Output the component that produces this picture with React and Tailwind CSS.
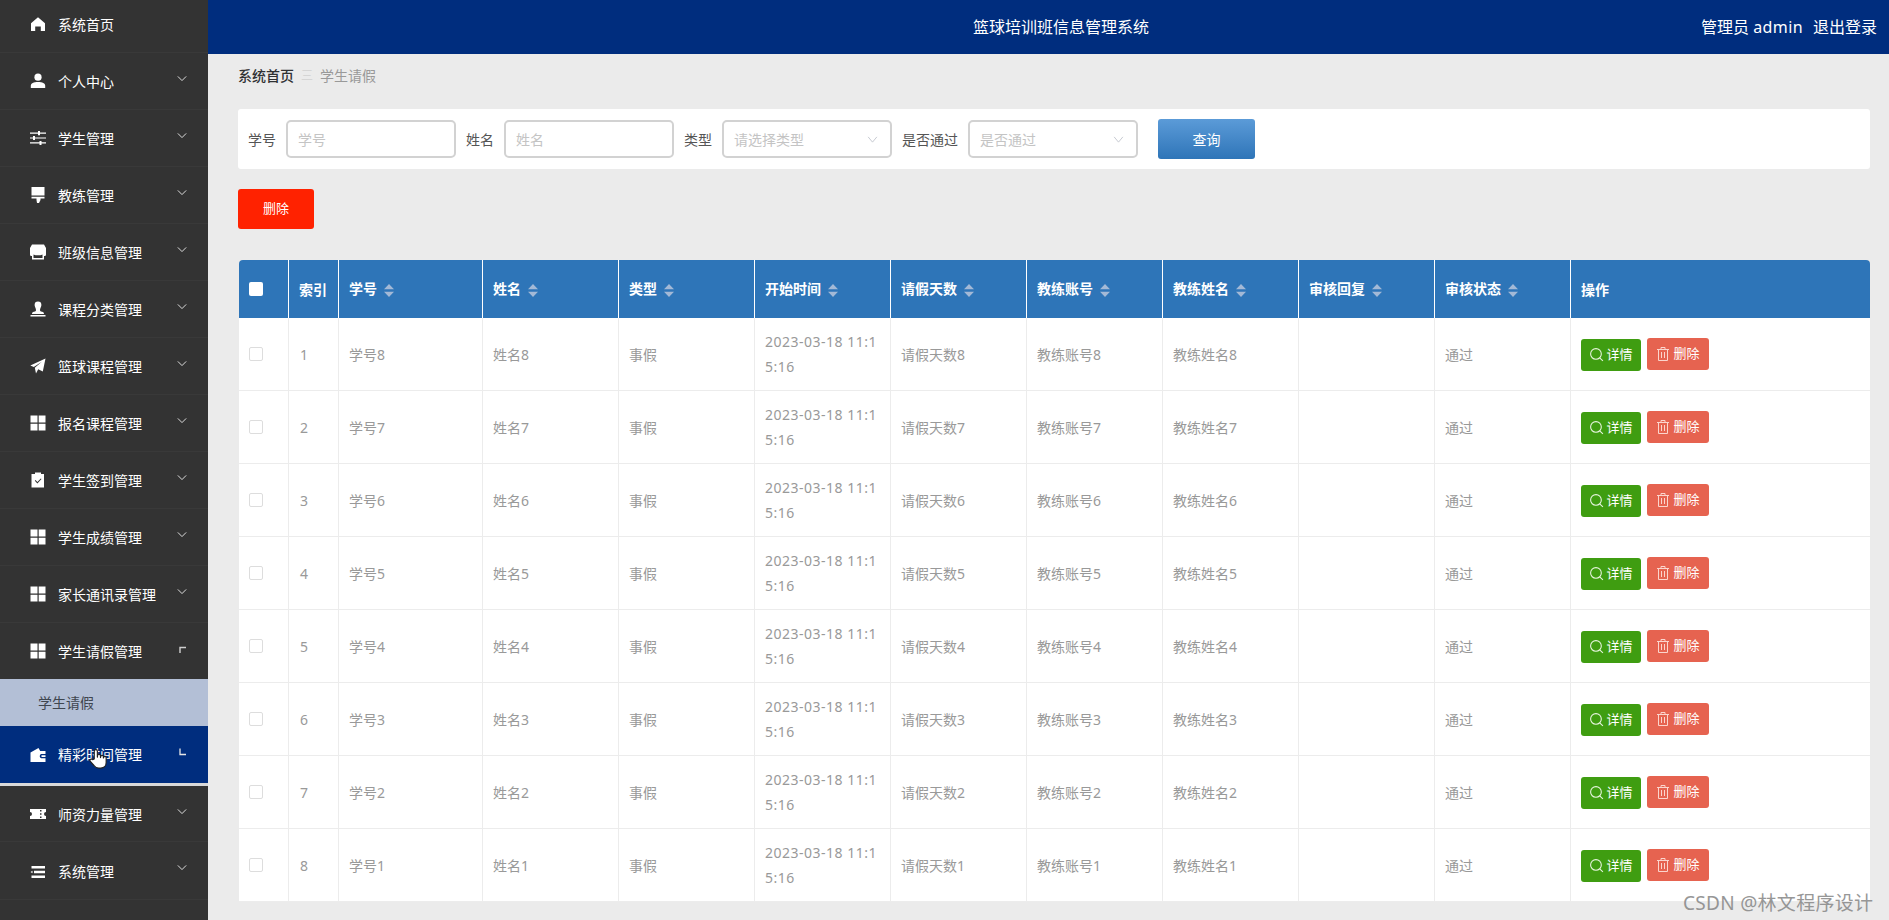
import React from "react";

const Ic = ({ children }) => (
  <svg viewBox="0 0 16 16" className="w-[16px] h-[16px] shrink-0" fill="#fff">{children}</svg>
);
const icons = {
  home: <Ic><path d="M8 1.2 15 7.2V15h-4.2v-4.6H5.2V15H1V7.2z" /></Ic>,
  user: <Ic><circle cx="8" cy="4.2" r="3.6" /><path d="M.8 15v-2.2C.8 10.2 3.6 9 8 9s7.2 1.2 7.2 3.8V15z" /></Ic>,
  sliders: <Ic><path d="M0 2.5h8V1h2v1.5h6v1.3h-6v1.5H8V3.8H0zM0 7.4h3V6h2v1.4h11v1.2H5V10H3V8.6H0zM0 12.3h9.500V11h2v1.300H16v1.300h-4.500V15h-2v-1.400H0z" /></Ic>,
  brush: <Ic><path d="M1.500 0h13v8.500h-13zM1.500 9.700h13V11.500h-4V13L9 16H7l-.5-3v-1.500h-5z" /></Ic>,
  shop: <Ic><path d="M2 .5h12L16 4v6.500c0 1-.8 1.500-1.500 1.500H14V15.500H2V12h-.5C.8 12 0 11.500 0 10.500V4zM3.500 10.500v3.500h9v-3.500l-2 .8H5.500z" fillRule="evenodd" /></Ic>,
  stamp: <Ic><path d="M8 0.500a3.400 3.400 0 0 1 3.400 3.400c0 2-1.400 3-1.400 5 0 1 .7 1.500 2 1.800 1.500.4 2 1 2 2.300H2c0-1.300.5-1.900 2-2.300 1.300-.3 2-.8 2-1.800 0-2-1.400-3-1.400-5A3.400 3.400 0 0 1 8 .5zM.5 14h15v1.500H.5z" /></Ic>,
  plane: <Ic><path d="M15.500.5 12.800 13.500 8.200 11.200 6 15.500 4.800 9.800 11.800 3.800 3.800 9 .3 7.400z" /></Ic>,
  grid: <Ic><path d="M.5.500h7v7h-7zM8.700.500h6.800v7H8.700zM.5 8.700h7v6.800h-7zM8.700 8.700h6.800v6.800H8.700z" /></Ic>,
  claim: <Ic><path fillRule="evenodd" d="M5 .5h6v1.500h3V15.500H1.500V2H5zM4.800 8.800l.7-.7 1.900 2 3.400-3.700.7.700-4.100 4.500z" /></Ic>,
  wallet: <Ic><path fillRule="evenodd" d="M.500 5.500 8.500 1l1.700 3h5.300v3h-4.300a2.300 2.300 0 0 0 0 4.300h4.300V15H.5zM11.500 8.300h4v1.600h-4z" /></Ic>,
  ticket: <Ic><path fillRule="evenodd" d="M0 3h16v3a2 2 0 0 0 0 4v3H0v-3a2 2 0 0 0 0-4zM10 4v1.500h1.500V4zM10 7.200v1.500h1.500V7.200zM10 10.500V12h1.500v-1.500z" /></Ic>,
  list: <Ic><path d="M1.500 2h13.500v2.600H1.500zM4 6.800h11v2.400H4zM.5 8l2-1.200v2.400zM1.500 11.400h13.500V14H1.500z" /></Ic>,
};

const Chevron = () => (
  <svg viewBox="0 0 12 8" className="w-[10px] h-[7px] absolute left-[177px] top-[22px]" fill="none" stroke="#dddddd" strokeWidth="1.200"><path d="M1 1.500 6 6.500 11 1.500" /></svg>
);
const CornerUp = () => (
  <svg viewBox="0 0 8 8" className="w-[8px] h-[8px] absolute left-[179px] top-[23px]" fill="none" stroke="#cfcfcf" strokeWidth="1.400"><path d="M1 7V1.500h6" /></svg>
);
const CornerDown = () => (
  <svg viewBox="0 0 8 8" className="w-[8px] h-[8px] absolute left-[179px] top-[22px]" fill="none" stroke="#e6e6e6" strokeWidth="1.300"><path d="M1 0.500V6.500h6" /></svg>
);

function NavItem({ icon, label, chevron = true, h = "h-[57px]", pt = "" }) {
  return (
    <div className={`relative ${h} ${pt} flex items-center pl-[30px] gap-[12px] border-b border-[#393939] text-[14px] text-white`}>
      {icons[icon]}
      <span>{label}</span>
      {chevron && <Chevron />}
    </div>
  );
}

function Sidebar() {
  return (
    <aside className="w-[208px] shrink-0 h-[920px] overflow-hidden bg-[#333333]">
      <div className="-mt-[4px]">
        <NavItem icon="home" label="系统首页" chevron={false} />
        <NavItem icon="user" label="个人中心" />
        <NavItem icon="sliders" label="学生管理" />
        <NavItem icon="brush" label="教练管理" />
        <NavItem icon="shop" label="班级信息管理" />
        <NavItem icon="stamp" label="课程分类管理" />
        <NavItem icon="plane" label="篮球课程管理" />
        <NavItem icon="grid" label="报名课程管理" />
        <NavItem icon="claim" label="学生签到管理" />
        <NavItem icon="grid" label="学生成绩管理" />
        <NavItem icon="grid" label="家长通讯录管理" />
        <div className="relative h-[56px] flex items-center pl-[30px] gap-[12px] text-[14px] text-white">
          {icons.grid}
          <span>学生请假管理</span>
          <CornerUp />
        </div>
        <div className="h-[47px] flex items-center pl-[38px] bg-[#b3bfd6] text-[14px] text-[#3f4650]">学生请假</div>
        <div className="relative h-[57px] flex items-center pl-[30px] gap-[12px] bg-[#002d7e] text-[14px] text-white">
          {icons.wallet}
          <span>精彩时间管理</span>
          <CornerDown />
          <svg viewBox="0 0 24 24" className="absolute left-[86px] top-[19px] w-[22px] h-[26px]" fill="#fff" stroke="#222" strokeWidth="1.300" strokeLinejoin="round">
            <path d="M9 13V4.500a1.700 1.700 0 0 1 3.400 0V11l.2-1.600a1.600 1.600 0 0 1 3.200.3V11.500l.2-1a1.500 1.500 0 0 1 3 .3V12l.2-.5a1.400 1.400 0 0 1 2.800.4V17c0 3.500-2.500 6-6 6h-2c-2.500 0-4-1-5.300-2.800L4.500 15.500c-1-1.800 1.300-3.200 2.700-1.700z" />
          </svg>
        </div>
        <div className="h-[3px] bg-[#d9d9d9]" />
        <NavItem icon="ticket" label="师资力量管理" h="h-[56px]" pt="pt-[1px]" />
        <NavItem icon="list" label="系统管理" h="h-[58px]" pt="pt-[2px]" />
      </div>
    </aside>
  );
}

const Sort = () => (
  <svg viewBox="0 0 10 13" className="inline-block w-[10px] h-[13px] ml-[7px] align-[-2px]" fill="#a3b9d6"><path d="M5 0 10 5.300H0zM5 13 0 7.700h10z" /></svg>
);

const Field = ({ label, ph, select }) => (
  <>
    <span className="text-[14px] text-[#555]">{label}</span>
    <div className="w-[170px] h-[38px] flex items-center justify-between border-2 border-[#d2d2d2] rounded-[5px] bg-white pl-[10px] pr-[12px] text-[14px] text-[#c4c4c4]">
      <span>{ph}</span>
      {select && (
        <svg viewBox="0 0 12 8" className="w-[11px] h-[7px]" fill="none" stroke="#c0c4cc" strokeWidth="1"><path d="M1 1l5 6 5-6" /></svg>
      )}
    </div>
  </>
);

const heads = ["学号", "姓名", "类型", "开始时间", "请假天数", "教练账号", "教练姓名", "审核回复", "审核状态"];
const rows = [8, 7, 6, 5, 4, 3, 2, 1];
const td = "border-b border-r border-[#ececec] pl-[10px] pr-0 align-middle";
const th = "border-r border-white pl-[10px] pr-0 text-left font-bold align-middle";

function Table() {
  return (
    <table className="ml-px mt-[31px] w-[1631px] table-fixed border-separate border-spacing-0 text-[14px]">
      <colgroup>
        <col className="w-[50px]" />
        <col className="w-[50px]" />
        <col className="w-[144px]" />
        {[0, 1, 2, 3, 4, 5, 6, 7].map((i) => <col key={i} className="w-[136px]" />)}
        <col className="w-[299px]" />
      </colgroup>
      <thead>
        <tr className="h-[58px] bg-[#2e75b8] text-white">
          <th className={`${th} rounded-tl-[4px]`}>
            <div className="w-[14px] h-[14px] rounded-[2px] bg-white" />
          </th>
          <th className={th}>索引</th>
          {heads.map((h) => (
            <th key={h} className={th}><span className="relative -top-px">{h}</span><Sort /></th>
          ))}
          <th className="pl-[10px] text-left font-bold rounded-tr-[4px]">操作</th>
        </tr>
      </thead>
      <tbody className="bg-white text-[#999999]">
        {rows.map((n, i) => (
          <tr key={n} className="h-[73px]">
            <td className={td}><div className="w-[14px] h-[14px] rounded-[2px] border border-[#dddddd] bg-white" /></td>
            <td className={`${td} pl-[11px]`}>{i + 1}</td>
            <td className={td}>学号{n}</td>
            <td className={td}>姓名{n}</td>
            <td className={td}>事假</td>
            <td className="border-b border-r border-[#ececec] pl-[10px] pr-[10px] align-middle break-all leading-[25px] tracking-[0.5px]">2023-03-18 11:15:16</td>
            <td className={td}>请假天数{n}</td>
            <td className={td}>教练账号{n}</td>
            <td className={td}>教练姓名{n}</td>
            <td className={td}></td>
            <td className={td}>通过</td>
            <td className="border-b border-[#ececec] pl-[10px]">
              <div className="flex items-start gap-[6px] text-[13px] text-white">
                <button className="mt-px w-[60px] h-[32px] rounded-[3px] bg-[#3f9d11] flex items-center justify-center gap-[2px]">
                  <svg viewBox="0 0 14 14" className="w-[15px] h-[15px]" fill="none" stroke="#e8f5e0" strokeWidth="1"><circle cx="6.500" cy="6.500" r="5" /><path d="M10 10.200 13 13" /></svg>
                  详情
                </button>
                <button className="w-[62px] h-[32px] rounded-[3px] bg-[#e66350] flex items-center justify-center gap-[3px]">
                  <svg viewBox="0 0 14 16" className="w-[14px] h-[16px]" fill="none" stroke="#fbd5cd" strokeWidth="1"><path d="M1 3.500h12M5 3.500V1.500h4v2M2.500 3.500v11h9v-11M5.500 6v6M8.500 6v6" /></svg>
                  删除
                </button>
              </div>
            </td>
          </tr>
        ))}
      </tbody>
    </table>
  );
}

export default function App() {
  return (
    <div className="relative flex w-[1889px] h-[920px] overflow-hidden bg-[#ebebeb]" style={{ fontFamily: '"Noto Sans", "Noto Sans CJK SC", sans-serif' }}>
      <Sidebar />
      <div className="flex-1 min-w-0">
        <header className="h-[54px] bg-[#002d7e] text-white text-[16px] flex items-center justify-between pl-[765px] pr-[12px]">
          <span>篮球培训班信息管理系统</span>
          <div className="flex gap-[10px]">
            <span>管理员 <span className="tracking-[0.4px]">admin</span></span>
            <span>退出登录</span>
          </div>
        </header>
        <main className="pl-[30px] pr-[19px]">
          <div className="h-[55px] flex items-center text-[14px] pb-[12px]">
            <span className="font-medium text-[#303133]">系统首页</span>
            <span className="mx-[7px] text-[#d5d5d5] text-[12px]">三</span>
            <span className="text-[#999999]">学生请假</span>
          </div>
          <div className="h-[60px] bg-white rounded-[3px] flex items-center pl-[10px]">
            <div className="flex items-center gap-[10px]"><Field label="学号" ph="学号" /></div>
            <div className="flex items-center gap-[10px] ml-[10px]"><Field label="姓名" ph="姓名" /></div>
            <div className="flex items-center gap-[10px] ml-[10px]"><Field label="类型" ph="请选择类型" select /></div>
            <div className="flex items-center gap-[10px] ml-[10px]"><Field label="是否通过" ph="是否通过" select /></div>
            <button className="ml-[20px] w-[97px] h-[40px] rounded-[3px] bg-gradient-to-b from-[#5b9bd8] to-[#2e75b8] text-white text-[14px]">查询</button>
          </div>
          <button className="block mt-[20px] w-[76px] h-[40px] rounded-[3px] bg-[#ff2200] text-white text-[13px]">删除</button>
          <Table />
        </main>
      </div>
      <div className="absolute left-[1683px] top-[889px] text-[19px] tracking-[0.3px] text-[#8c8c8c] opacity-90 whitespace-nowrap">CSDN @林文程序设计</div>
    </div>
  );
}
